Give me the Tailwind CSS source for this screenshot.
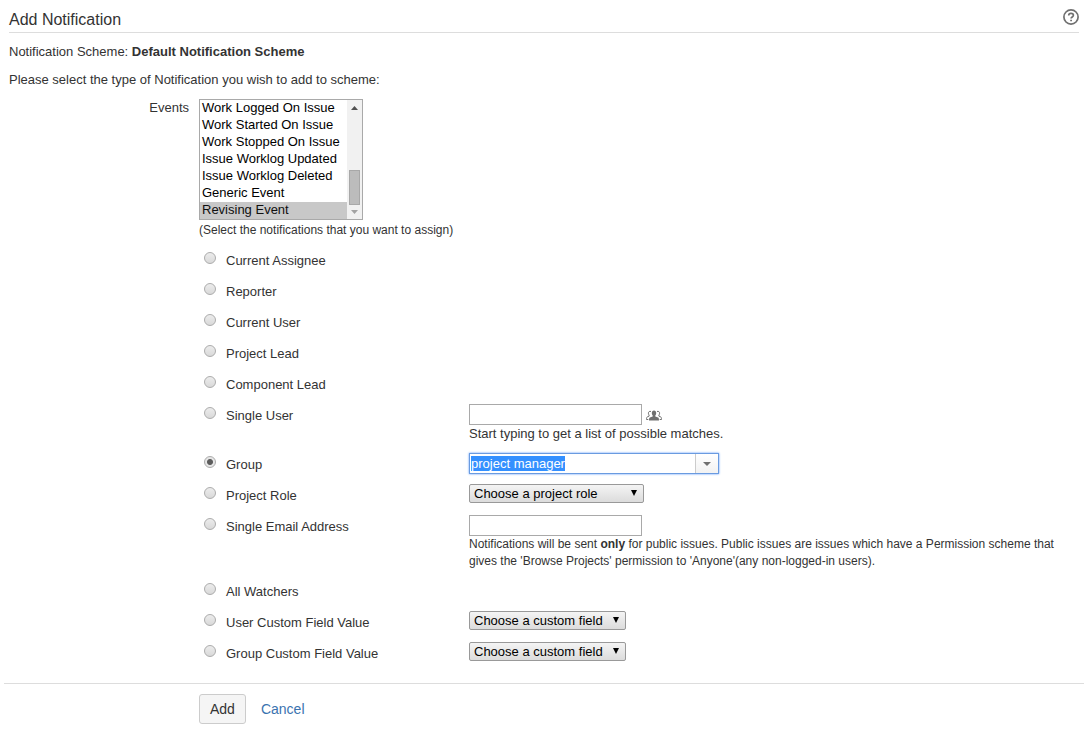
<!DOCTYPE html>
<html lang="en">
<head>
<meta charset="utf-8">
<meta name="viewport" content="width=device-width, initial-scale=1">
<title>Add Notification</title>
<script src="https://cdn.jsdelivr.net/npm/@tailwindcss/browser@4"></script>
</head>
<body class="bg-white px-1 font-['Liberation_Sans',Arial,sans-serif] text-[13px] leading-5 text-[#333]">
<form>
  <header class="mr-2 ml-[5px] flex items-start justify-between border-b border-[#ddd] pt-[9px] pb-px">
    <h1 class="text-base leading-[22px]">Add Notification</h1>
    <a href="#" aria-label="Help" class="text-[#707070]">
      <svg class="block size-4" viewBox="0 0 16 16" fill="none" stroke="currentColor">
        <circle cx="8" cy="8" r="7.1" stroke-width="1.7"/>
        <path d="M5.7 6.5C5.7 5 6.7 4.3 8 4.3s2.4.8 2.4 2c0 1.7-2.3 1.6-2.3 3.3" stroke-width="1.7"/>
        <path d="M8.1 10.7v1.6" stroke-width="1.8"/>
      </svg>
    </a>
  </header>

  <div class="mx-[5px] mt-[9px] space-y-2">
    <p>Notification Scheme: <strong>Default Notification Scheme</strong></p>
    <p>Please select the type of Notification you wish to add to scheme:</p>
  </div>

  <div class="mt-[9px] flex">
    <label for="events" class="w-[185px] shrink-0 text-right leading-[18px]">Events</label>
    <div class="ml-[10px]">
      <div class="flex w-[164px] border border-[#a9a9a9]">
        <select id="events" multiple size="7" class="block h-[119px] w-[147px] appearance-none overflow-hidden rounded-none border-0 bg-white p-0 text-[13px] text-black outline-none">
          <option class="h-[17px] min-h-0 px-[2px] py-0 leading-[15px]">Work Logged On Issue</option>
          <option class="h-[17px] min-h-0 px-[2px] py-0 leading-[15px]">Work Started On Issue</option>
          <option class="h-[17px] min-h-0 px-[2px] py-0 leading-[15px]">Work Stopped On Issue</option>
          <option class="h-[17px] min-h-0 px-[2px] py-0 leading-[15px]">Issue Worklog Updated</option>
          <option class="h-[17px] min-h-0 px-[2px] py-0 leading-[15px]">Issue Worklog Deleted</option>
          <option class="h-[17px] min-h-0 px-[2px] py-0 leading-[15px]">Generic Event</option>
          <option selected class="h-[17px] min-h-0 bg-linear-to-b from-[#c8c8c8] to-[#c8c8c8] px-[2px] py-0 leading-[15px]">Revising Event</option>
        </select>
        <div aria-hidden="true" class="flex flex-1 flex-col items-center justify-between bg-[#f1f1f1] pt-[6px] pb-[5px]">
          <svg class="h-1 w-[7px]" viewBox="0 0 7 4"><path d="M0 4 3.5 0 7 4z" fill="#505050"/></svg>
          <div class="mt-auto mb-[5px] h-[35px] w-[11px] border border-[#a8a8a8] bg-[#bcbcbc]"></div>
          <svg class="h-1 w-[7px]" viewBox="0 0 7 4"><path d="M0 0 3.5 4 7 0z" fill="#a3a3a3"/></svg>
        </div>
      </div>
      <p class="text-xs leading-5">(Select the notifications that you want to assign)</p>
    </div>
  </div>

  <fieldset aria-label="Notification type" class="mt-[5px] ml-[200px]">
    <div class="flex pt-1 pb-1">
      <input type="radio" name="type" id="r1" class="mt-[3px] mr-[10px] size-3 shrink-0 appearance-none rounded-full border border-[#acacac] bg-linear-to-b from-[#ececec] to-[#d9d9d9]">
      <label for="r1" class="w-[243px] shrink-0 leading-[23px]">Current Assignee</label>
    </div>
    <div class="flex pt-1 pb-1">
      <input type="radio" name="type" id="r2" class="mt-[3px] mr-[10px] size-3 shrink-0 appearance-none rounded-full border border-[#acacac] bg-linear-to-b from-[#ececec] to-[#d9d9d9]">
      <label for="r2" class="w-[243px] shrink-0 leading-[23px]">Reporter</label>
    </div>
    <div class="flex pt-1 pb-1">
      <input type="radio" name="type" id="r3" class="mt-[3px] mr-[10px] size-3 shrink-0 appearance-none rounded-full border border-[#acacac] bg-linear-to-b from-[#ececec] to-[#d9d9d9]">
      <label for="r3" class="w-[243px] shrink-0 leading-[23px]">Current User</label>
    </div>
    <div class="flex pt-1 pb-1">
      <input type="radio" name="type" id="r4" class="mt-[3px] mr-[10px] size-3 shrink-0 appearance-none rounded-full border border-[#acacac] bg-linear-to-b from-[#ececec] to-[#d9d9d9]">
      <label for="r4" class="w-[243px] shrink-0 leading-[23px]">Project Lead</label>
    </div>
    <div class="flex pt-1 pb-1">
      <input type="radio" name="type" id="r5" class="mt-[3px] mr-[10px] size-3 shrink-0 appearance-none rounded-full border border-[#acacac] bg-linear-to-b from-[#ececec] to-[#d9d9d9]">
      <label for="r5" class="w-[243px] shrink-0 leading-[23px]">Component Lead</label>
    </div>

    <div class="flex pt-1 pb-[6px]">
      <input type="radio" name="type" id="r6" class="mt-[3px] mr-[10px] size-3 shrink-0 appearance-none rounded-full border border-[#acacac] bg-linear-to-b from-[#ececec] to-[#d9d9d9]">
      <label for="r6" class="w-[243px] shrink-0 leading-[23px]">Single User</label>
      <div>
        <div class="flex items-end gap-1">
          <input type="text" aria-label="Single user" class="block h-[21px] w-[173px] border border-[#a9a9a9] px-[2px] text-[13px] outline-none">
          <button type="button" aria-label="Select user" class="pb-1 text-[#707070]">
            <svg class="block h-[11px] w-4" viewBox="0 0 16 11">
              <path d="M5.8 3.200C5.800 1.600 6.600.5 8 .5s2.200 1.100 2.200 2.700c0 1-.4 1.700-.9 2.200v1l2.800 1.200c.7.3.9 1.200.9 2.900H3c0-1.700.2-2.600.9-2.900l2.800-1.200v-1c-.5-.5-.9-1.200-.9-2.200z" fill="currentColor"/>
              <path d="M5 1.500C3.500.9 2.400 1.800 2.400 3.200c0 .8.300 1.400.7 1.900v1l-1.800.8c-.6.300-.8 1-.8 2.600h1.800M11 1.500c1.500-.6 2.600.3 2.600 1.700 0 .8-.3 1.400-.7 1.900v1l1.800.8c.6.300.8 1 .8 2.600h-1.800" fill="none" stroke="currentColor" stroke-width="1"/>
            </svg>
          </button>
        </div>
        <p class="leading-[18px]">Start typing to get a list of possible matches.</p>
      </div>
    </div>

    <div class="flex pt-1 pb-1">
      <input type="radio" name="type" id="r7" checked class="mt-[3px] mr-[10px] size-3 shrink-0 appearance-none rounded-full border border-[#acacac] bg-[radial-gradient(circle,#5c5c5c_0,#5c5c5c_2.5px,#e6e6e6_3.5px)]">
      <label for="r7" class="w-[243px] shrink-0 leading-[23px]">Group</label>
      <div class="flex h-[21px] w-[250px] border border-[#6a9be0] shadow-[0_0_2px_#5897fb]">
        <input type="text" id="group" aria-label="Group" value="project manager" class="w-full min-w-0 flex-1 px-px text-[13px] leading-[15px] outline-none selection:bg-[#3390fffe] selection:text-white">
        <button type="button" aria-label="Show groups" class="flex w-[23px] items-center justify-center border-l border-[#ccc] bg-linear-to-b from-white to-[#f2f2f2]">
          <svg class="h-1 w-2" viewBox="0 0 8 4"><path d="M0 0h8L4 4z" fill="#707070"/></svg>
        </button>
      </div>
    </div>

    <div class="flex pt-1 pb-1">
      <input type="radio" name="type" id="r8" class="mt-[3px] mr-[10px] size-3 shrink-0 appearance-none rounded-full border border-[#acacac] bg-linear-to-b from-[#ececec] to-[#d9d9d9]">
      <label for="r8" class="w-[243px] shrink-0 leading-[23px]">Project Role</label>
      <div class="relative h-[19px] w-[175px]">
        <select aria-label="Project role" class="block h-full w-full appearance-none rounded-xs border border-[#999] bg-linear-to-b from-[#f4f4f4] to-[#dcdcdc] pl-1 text-[13px] leading-4 text-black outline-none"><option>Choose a project role</option></select>
        <svg class="pointer-events-none absolute top-[6px] right-[7px] h-[6px] w-[6px]" viewBox="0 0 6 6"><path d="M0 0h6L3 6z"/></svg>
      </div>
    </div>

    <div class="flex pt-1 pb-[6px]">
      <input type="radio" name="type" id="r9" class="mt-[3px] mr-[10px] size-3 shrink-0 appearance-none rounded-full border border-[#acacac] bg-linear-to-b from-[#ececec] to-[#d9d9d9]">
      <label for="r9" class="w-[243px] shrink-0 leading-[23px]">Single Email Address</label>
      <div>
        <input type="text" aria-label="Single email address" class="block h-[21px] w-[173px] border border-[#a9a9a9] px-[2px] text-[13px] outline-none">
        <p class="max-w-[600px] text-xs leading-[17px]">Notifications will be sent <strong>only</strong> for public issues. Public issues are issues which have a Permission scheme that gives the 'Browse Projects' permission to 'Anyone'(any non-logged-in users).</p>
      </div>
    </div>

    <div class="flex pt-1 pb-1">
      <input type="radio" name="type" id="r10" class="mt-[3px] mr-[10px] size-3 shrink-0 appearance-none rounded-full border border-[#acacac] bg-linear-to-b from-[#ececec] to-[#d9d9d9]">
      <label for="r10" class="w-[243px] shrink-0 leading-[23px]">All Watchers</label>
    </div>

    <div class="flex pt-1 pb-1">
      <input type="radio" name="type" id="r11" class="mt-[3px] mr-[10px] size-3 shrink-0 appearance-none rounded-full border border-[#acacac] bg-linear-to-b from-[#ececec] to-[#d9d9d9]">
      <label for="r11" class="w-[243px] shrink-0 leading-[23px]">User Custom Field Value</label>
      <div class="relative h-[19px] w-[157px]">
        <select aria-label="User custom field" class="block h-full w-full appearance-none rounded-xs border border-[#999] bg-linear-to-b from-[#f4f4f4] to-[#dcdcdc] pl-1 text-[13px] leading-4 text-black outline-none"><option>Choose a custom field</option></select>
        <svg class="pointer-events-none absolute top-[6px] right-[7px] h-[6px] w-[6px]" viewBox="0 0 6 6"><path d="M0 0h6L3 6z"/></svg>
      </div>
    </div>

    <div class="flex pt-1 pb-1">
      <input type="radio" name="type" id="r12" class="mt-[3px] mr-[10px] size-3 shrink-0 appearance-none rounded-full border border-[#acacac] bg-linear-to-b from-[#ececec] to-[#d9d9d9]">
      <label for="r12" class="w-[243px] shrink-0 leading-[23px]">Group Custom Field Value</label>
      <div class="relative h-[19px] w-[157px]">
        <select aria-label="Group custom field" class="block h-full w-full appearance-none rounded-xs border border-[#999] bg-linear-to-b from-[#f4f4f4] to-[#dcdcdc] pl-1 text-[13px] leading-4 text-black outline-none"><option>Choose a custom field</option></select>
        <svg class="pointer-events-none absolute top-[6px] right-[7px] h-[6px] w-[6px]" viewBox="0 0 6 6"><path d="M0 0h6L3 6z"/></svg>
      </div>
    </div>
  </fieldset>

  <footer class="mr-[3px] mt-[14px] flex items-center border-t border-[#ddd] pt-[10px] pl-[195px] text-sm">
    <button type="submit" class="h-[30px] rounded-[3px] border border-[#ccc] bg-[#f5f5f5] px-[10px]">Add</button>
    <a href="#" class="ml-[15px] text-[#3b73af]">Cancel</a>
  </footer>
</form>
<script>
  const group = document.getElementById('group');
  group.focus();
  group.select();
</script>
</body>
</html>
